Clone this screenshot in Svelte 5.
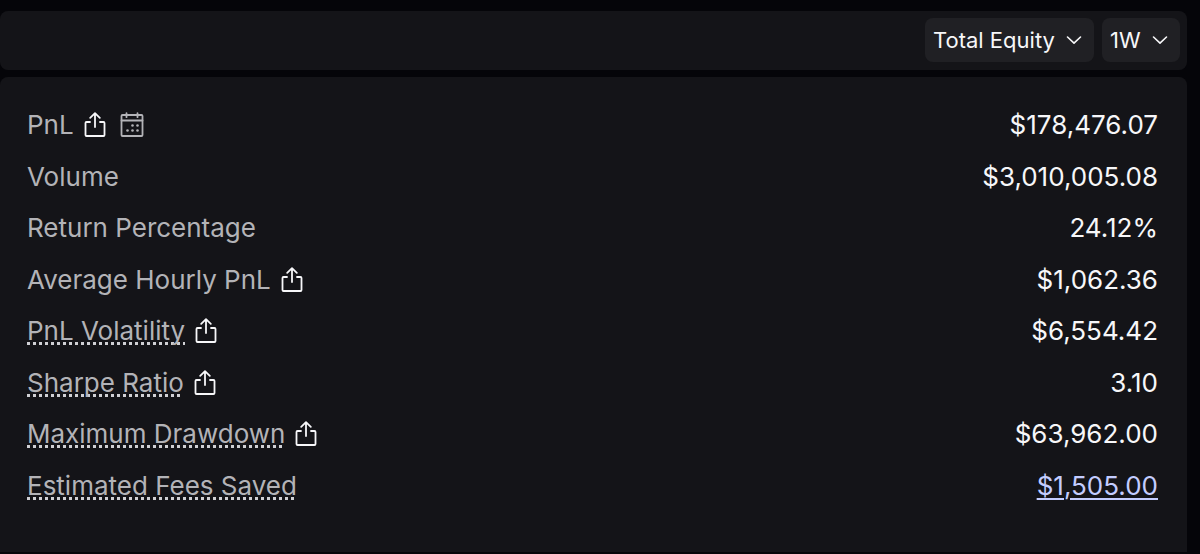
<script lang="ts">
	type Stat = {
		label: string;
		value: string;
		hint?: boolean;
		share?: boolean;
		calendar?: boolean;
		href?: string;
	};

	let account = $state('Total Equity');
	let period = $state('1W');

	const accounts = ['Total Equity', 'Perps', 'Spot'];
	const periods = ['1D', '1W', '1M'];

	const stats: Stat[] = [
		{ label: 'PnL', value: '$178,476.07', share: true, calendar: true },
		{ label: 'Volume', value: '$3,010,005.08' },
		{ label: 'Return Percentage', value: '24.12%' },
		{ label: 'Average Hourly PnL', value: '$1,062.36', share: true },
		{ label: 'PnL Volatility', value: '$6,554.42', hint: true, share: true },
		{ label: 'Sharpe Ratio', value: '3.10', hint: true, share: true },
		{ label: 'Maximum Drawdown', value: '$63,962.00', hint: true, share: true },
		{ label: 'Estimated Fees Saved', value: '$1,505.00', hint: true, href: '#fees' }
	];
</script>

{#snippet chevron()}
	<svg class="chevron" viewBox="0 0 16 10" width="16" height="10" aria-hidden="true">
		<path d="M1.5 2 8 8.2 14.5 2" />
	</svg>
{/snippet}

<div class="page">
	<header class="toolbar">
		<div class="picker">
			<select bind:value={account} aria-label="Account">
				{#each accounts as option}
					<option value={option}>{option}</option>
				{/each}
			</select>
			{@render chevron()}
		</div>
		<div class="picker">
			<select bind:value={period} aria-label="Period">
				{#each periods as option}
					<option value={option}>{option}</option>
				{/each}
			</select>
			{@render chevron()}
		</div>
	</header>

	<dl class="panel">
		{#each stats as stat}
			<div class="row">
				<dt>
					<span class:hint={stat.hint}>{stat.label}</span>
					<span class="icons">
						{#if stat.share}
							<button class="icon share" aria-label="Share {stat.label}">
								<svg viewBox="0 0 22 26" width="22" height="26">
									<path d="M6 10H2.5a1 1 0 0 0-1 1v12a1 1 0 0 0 1 1h17a1 1 0 0 0 1-1V11a1 1 0 0 0-1-1H16" />
									<path d="M11 15V1.5M6.2 5.8 11 1.2l4.8 4.6" />
								</svg>
							</button>
						{/if}
						{#if stat.calendar}
							<button class="icon calendar" aria-label="{stat.label} calendar">
								<svg viewBox="0 0 24 26" width="24" height="26">
									<rect x="1.5" y="3" width="21" height="21" rx="1" />
									<path d="M1.5 8.5h21M6.5 1.2v4M17.5 1.2v4" />
									<g class="dots">
										<circle cx="12.5" cy="13.5" r="1.3" />
										<circle cx="17.5" cy="13.5" r="1.3" />
										<circle cx="7.5" cy="18.5" r="1.3" />
										<circle cx="12.5" cy="18.5" r="1.3" />
										<circle cx="17.5" cy="18.5" r="1.3" />
									</g>
								</svg>
							</button>
						{/if}
					</span>
				</dt>
				<dd>
					{#if stat.href}
						<a href={stat.href}>{stat.value}</a>
					{:else}
						{stat.value}
					{/if}
				</dd>
			</div>
		{/each}
	</dl>
</div>

<style>
	:global(body) {
		margin: 0;
		background: #050509;
	}

	.page {
		box-sizing: border-box;
		display: flex;
		flex-direction: column;
		gap: 7px;
		min-height: 100vh;
		padding: 11px 13px 2px 0;
		font-family: Inter, 'Liberation Sans', sans-serif;
		color: #f7f7f9;
	}

	.toolbar {
		display: flex;
		justify-content: flex-end;
		gap: 8px;
		padding: 7px 7px 8px;
		border-radius: 8px;
		background: #141418;
	}

	.picker {
		display: grid;
		align-items: center;
		height: 44px;
		border-radius: 8px;
		background: #202024;
	}

	.picker select {
		grid-area: 1 / 1;
		height: 100%;
		margin: 0;
		padding: 0 39px 0 8px;
		border: 0;
		border-radius: 8px;
		appearance: none;
		background: transparent;
		color: inherit;
		font: inherit;
		font-size: 22px;
		cursor: pointer;
	}

	.chevron {
		grid-area: 1 / 1;
		justify-self: end;
		margin-right: 12px;
		fill: none;
		stroke: currentColor;
		stroke-width: 1.6;
		stroke-linecap: round;
		stroke-linejoin: round;
		pointer-events: none;
	}

	.panel {
		display: flex;
		flex: 1;
		flex-direction: column;
		justify-content: space-between;
		margin: 0;
		padding: 32px 29px 50px 27px;
		border-radius: 8px 8px 0 0;
		background: #141418;
		font-size: 26px;
		line-height: 32px;
	}

	.row {
		display: flex;
		justify-content: space-between;
	}

	dt {
		display: flex;
		align-items: center;
		gap: 10px;
		color: #b3b3b7;
	}

	dd {
		margin: 0;
	}

	.hint {
		text-decoration: underline dotted #d0d0d4 3px;
		text-underline-offset: 2px;
		text-decoration-skip-ink: none;
	}

	.icons {
		display: flex;
		gap: 14px;
	}

	.icon {
		display: flex;
		padding: 0;
		border: 0;
		background: none;
		cursor: pointer;
	}

	.icon svg {
		fill: none;
		stroke: currentColor;
		stroke-width: 1.8;
		stroke-linecap: round;
		stroke-linejoin: round;
	}

	.share {
		color: #f7f7f9;
	}

	.calendar {
		color: #b3b3b7;
	}

	.icon .dots {
		fill: currentColor;
		stroke: none;
	}

	a {
		color: #c3ccff;
		text-decoration-thickness: 2px;
		text-underline-offset: 3px;
	}
</style>
